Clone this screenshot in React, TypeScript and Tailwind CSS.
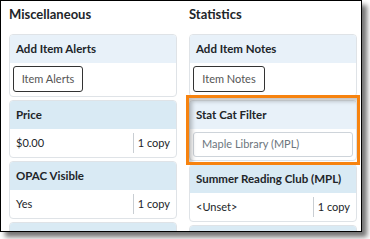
import React from "react";

const font = { fontFamily: 'Lato, "Liberation Sans", sans-serif' };

function Card({
  title,
  tone = "light",
  children,
}: {
  title: string;
  tone?: "light" | "blue";
  children?: React.ReactNode;
}) {
  return (
    <div className="mb-[3px] overflow-hidden rounded-[4px] border border-[#dfe3e7] bg-white">
      <div
        className={`flex h-[28px] items-center whitespace-nowrap px-[6px] text-[11.5px] font-bold text-[#212529] ${
          tone === "light" ? "bg-[#e8f1f9]" : "bg-[#d9eaf4]"
        }`}
      >
        {title}
      </div>
      {children}
    </div>
  );
}

function ValueRow({ value }: { value: string }) {
  return (
    <div className="flex h-[28px] items-center pl-[6px] pr-[6px] text-[11px] text-[#212529]">
      <span className="flex-1">{value}</span>
      <span className="h-[20px] border-l border-[#c9ced3] pl-[4px] leading-[20px]">1 copy</span>
    </div>
  );
}

function ButtonRow({ label, width }: { label: string; width: string }) {
  return (
    <div className="h-[33px] px-[3px] pt-[3px]">
      <div
        className={`flex h-[26px] ${width} items-center justify-center rounded-[3px] border border-[#333] text-[11px] text-[#555]`}
      >
        {label}
      </div>
    </div>
  );
}

export default function App() {
  return (
    <div className="h-[239px] w-[370px] bg-white" style={font}>
      <div className="relative h-[232px] w-[362px] overflow-hidden border border-black bg-white shadow-[5px_5px_5px_rgba(0,0,0,0.55)]">
        <div className="grid grid-cols-2 gap-[12px] pl-[8px] pr-[4px] pt-[3px]">
          {/* Miscellaneous */}
          <div>
            <div className="mb-[10px] h-[20px] text-[13px] font-bold leading-[20px] text-[#212529]">
              Miscellaneous
            </div>
            <Card title="Add Item Alerts">
              <ButtonRow label="Item Alerts" width="w-[70px]" />
            </Card>
            <Card title="Price" tone="blue">
              <ValueRow value="$0.00" />
            </Card>
            <Card title="OPAC Visible" tone="blue">
              <ValueRow value="Yes" />
            </Card>
            <Card title="" tone="blue" />
          </div>

          {/* Statistics */}
          <div>
            <div className="mb-[10px] h-[20px] text-[13px] font-bold leading-[20px] text-[#212529]">
              Statistics
            </div>
            <Card title="Add Item Notes">
              <ButtonRow label="Item Notes" width="w-[72px]" />
            </Card>
            <div className="mb-[3px] overflow-hidden rounded-[4px] border border-[#dfe3e7] bg-white">
              <div className="flex h-[28px] items-center bg-[#e8f1f9] px-[6px] text-[11.5px] font-bold text-[#212529]">
                Stat Cat Filter
              </div>
              <div className="h-[31px] px-[3px] pt-[3px]">
                <div className="flex h-[25px] items-center rounded-[3px] border border-[#ced4da] px-[8px] text-[11px] text-[#6c757d]">
                  Maple Library (MPL)
                </div>
              </div>
            </div>
            <Card title="Summer Reading Club (MPL)" tone="blue">
              <ValueRow value="<Unset>" />
            </Card>
            <Card title="" tone="blue" />
          </div>
        </div>

        {/* callout highlight */}
        <div className="pointer-events-none absolute left-[185px] top-[94px] h-[70px] w-[174px] border-[3px] border-[#f7830f] shadow-[inset_3px_3px_4px_rgba(0,0,0,0.25)]" />
      </div>
    </div>
  );
}
